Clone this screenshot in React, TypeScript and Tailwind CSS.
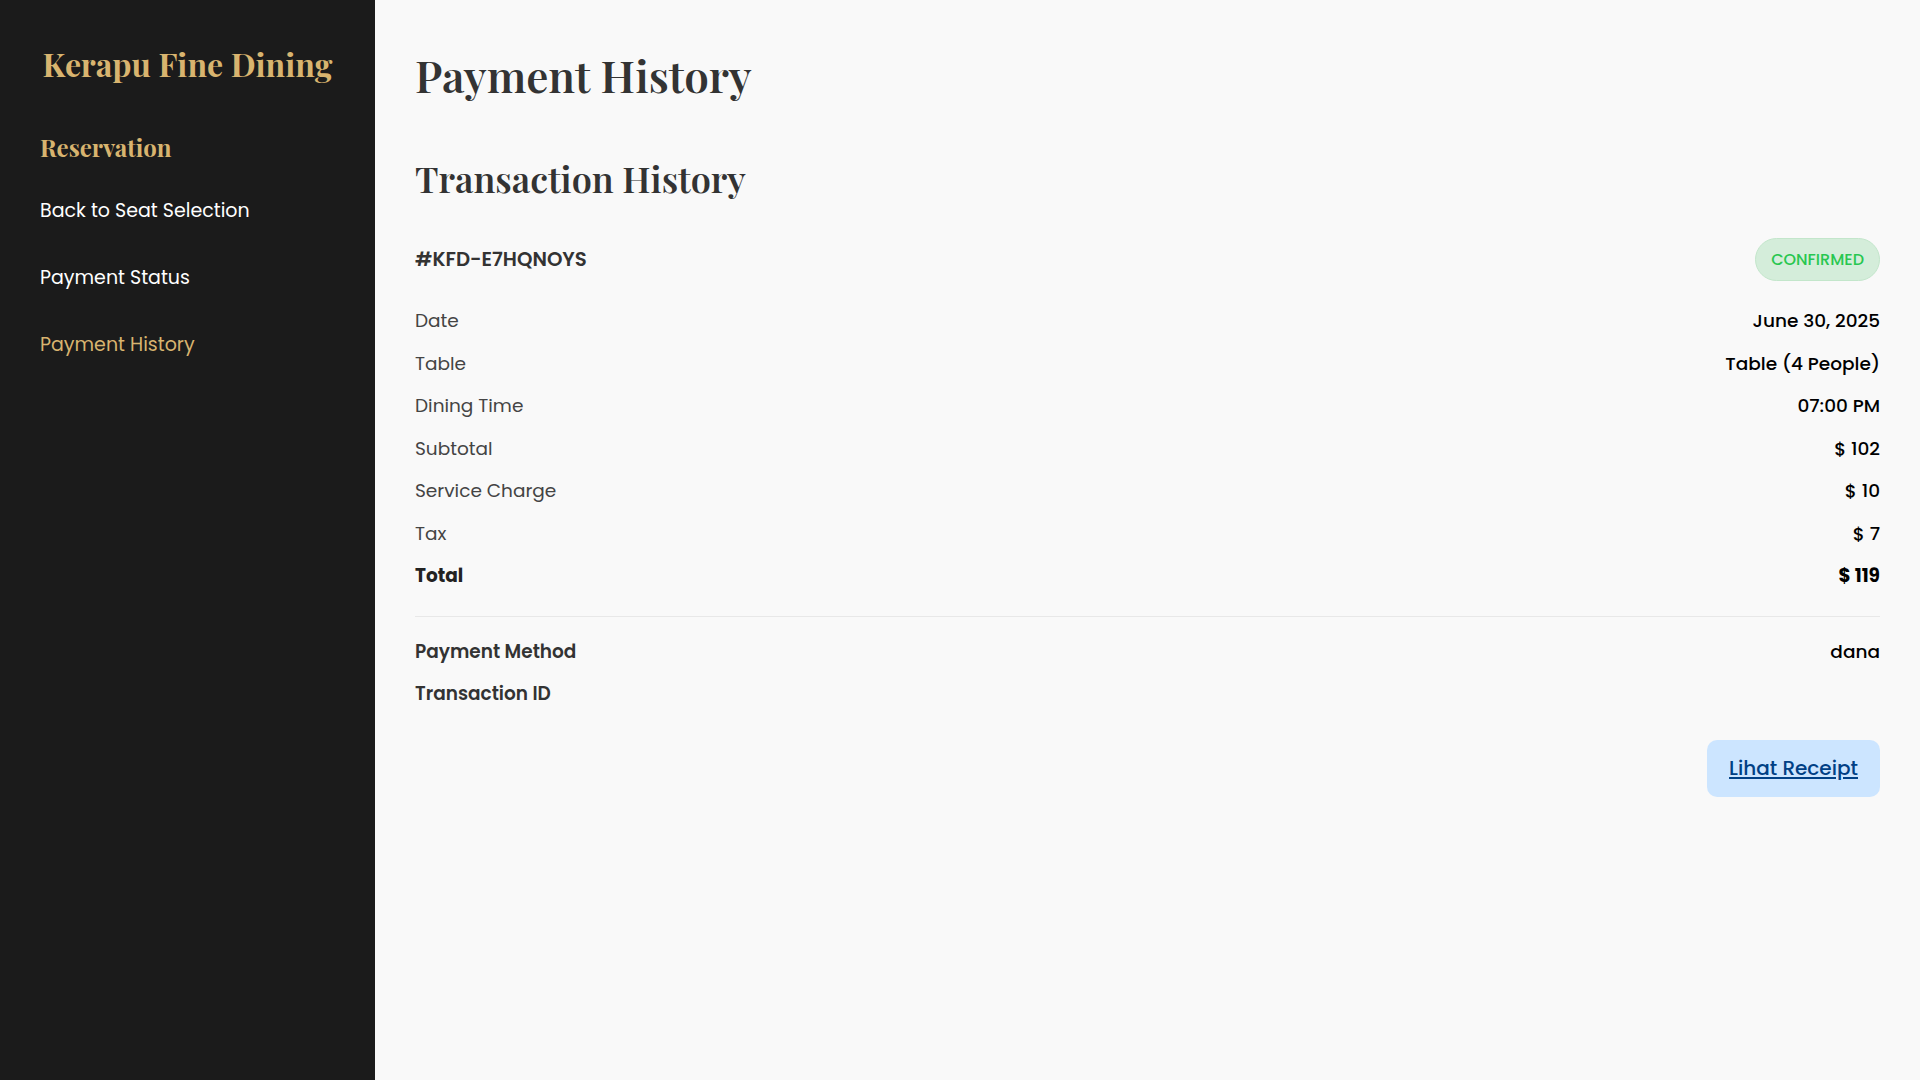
import React from 'react';

const serif = { fontFamily: '"Playfair Display", "Liberation Serif", "DejaVu Serif", serif' };

type Row = { label: string; value: string; bold?: boolean };

const rows: Row[] = [
  { label: 'Date', value: 'June 30, 2025' },
  { label: 'Table', value: 'Table (4 People)' },
  { label: 'Dining Time', value: '07:00 PM' },
  { label: 'Subtotal', value: '$ 102' },
  { label: 'Service Charge', value: '$ 10' },
  { label: 'Tax', value: '$ 7' },
  { label: 'Total', value: '$ 119', bold: true },
];

function Sidebar() {
  return (
    <aside className="w-[375px] shrink-0 bg-[#1b1b1b] min-h-screen px-10 pt-[40px]">
      <h1
        className="-mx-4 whitespace-nowrap text-[32px] leading-[48px] font-bold text-center text-[#d8b46f]"
        style={serif}
      >
        Kerapu Fine Dining
      </h1>
      <h2 className="mt-[42px] text-[24px] leading-[34px] font-bold text-[#d8b46f]" style={serif}>
        Reservation
      </h2>
      <nav className="mt-[33px] flex flex-col gap-[40px] text-[19px] leading-[27px]">
        <a className="text-white">Back to Seat Selection</a>
        <a className="text-white">Payment Status</a>
        <a className="text-[#d8b46f]">Payment History</a>
      </nav>
    </aside>
  );
}

export default function App() {
  return (
    <div
      className="flex min-h-screen bg-[#f9f9f9]"
      style={{ fontFamily: 'Poppins, Inter, "Liberation Sans", sans-serif' }}
    >
      <Sidebar />
      <main className="flex-1 px-10 pt-[44px]">
        <h1 className="text-[44px] leading-[62px] font-semibold text-[#333333]" style={serif}>
          Payment History
        </h1>
        <h2 className="mt-[47px] text-[36px] leading-[50px] font-semibold text-[#333333]" style={serif}>
          Transaction History
        </h2>

        <div className="mt-[35px] flex items-center justify-between">
          <span className="text-[19.7px] font-semibold text-[#333333]">#KFD-E7HQNOYS</span>
          <span className="rounded-full bg-[#d4edda] border border-[#c3e6cb] px-[15px] h-[43px] flex items-center text-[16px] font-medium text-[#28c750]">
            CONFIRMED
          </span>
        </div>

        <div className="mt-[19px] flex flex-col">
          {rows.map((r) => (
            <div key={r.label} className="flex justify-between items-center py-[8px] text-[18.5px] leading-[26.5px]">
              <span className={r.bold ? 'font-bold text-[#222]' : 'text-[#444444]'}>{r.label}</span>
              <span className={r.bold ? 'font-bold text-black' : 'font-medium text-black'}>{r.value}</span>
            </div>
          ))}
        </div>

        <div className="mt-[18px] border-t border-[#e8e8e8]" />

        <div className="mt-[14px] flex flex-col">
          <div className="flex justify-between items-center py-[8px] text-[18.5px] leading-[26.5px]">
            <span className="font-semibold text-[#333333]">Payment Method</span>
            <span className="font-medium text-black">dana</span>
          </div>
          <div className="flex justify-between items-center py-[8px] text-[18.5px] leading-[26.5px]">
            <span className="font-semibold text-[#333333]">Transaction ID</span>
            <span className="font-medium text-black"></span>
          </div>
        </div>

        <div className="mt-[24px] flex justify-end">
          <a className="h-[57px] px-[22px] flex items-center rounded-[10px] bg-[#cce5ff] text-[#004085] text-[20px] font-medium underline underline-offset-2">
            Lihat Receipt
          </a>
        </div>
      </main>
    </div>
  );
}
